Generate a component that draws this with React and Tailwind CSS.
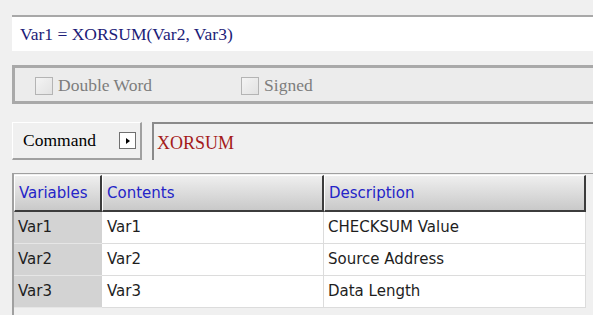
const serif = { fontFamily: '"Liberation Serif", "Times New Roman", serif' };

const CheckItem = ({ label, className }) => (
  <div className={`flex items-center ${className}`}>
    <span className="h-[18px] w-[18px] border border-[#b4b4b4] bg-gradient-to-br from-[#f4f4f4] to-[#e2e2e2]" />
    <span className="ml-[5px] text-[17.5px] leading-none text-[#7d7d7d]">{label}</span>
  </div>
);

const rows = [
  { name: 'Var1', contents: 'Var1', description: 'CHECKSUM Value' },
  { name: 'Var2', contents: 'Var2', description: 'Source Address' },
  { name: 'Var3', contents: 'Var3', description: 'Data Length' },
];

const HeaderCell = ({ children, className }) => (
  <div
    className={`flex h-full items-center border-l border-t border-b-2 border-r-2 border-l-white border-t-white border-b-[#3c3c3c] border-r-[#3c3c3c] bg-gradient-to-b from-[#efefef] to-[#c9c9c9] px-[4px] text-[#2424c8] ${className}`}
  >
    {children}
  </div>
);

export default function App() {
  return (
    <div className="h-[315px] w-[600px] overflow-hidden bg-white">
      <div className="flex h-full w-[593px] flex-col bg-[#f0f0f0] pl-[12px] pt-[15px]">
        {/* formula */}
        <div
          className="flex h-[36px] items-center border-t-2 border-[#a8a8a8] bg-white pl-[8px] text-[17.5px] text-[#1c1c78]"
          style={serif}
        >
          Var1 = XORSUM(Var2, Var3)
        </div>

        {/* options */}
        <div
          className="mt-[14px] flex h-[39px] items-center border-y-[3px] border-l-[3px] border-[#a9a9a9] bg-[#ececec] pt-[3px]"
          style={serif}
        >
          <CheckItem label="Double Word" className="ml-[20px]" />
          <CheckItem label="Signed" className="ml-[89px]" />
        </div>

        {/* command */}
        <div className="mt-[18px] flex h-[38px] items-stretch">
          <div
            className="flex w-[130px] items-center justify-between border border-b-2 border-r-2 border-l-white border-t-white border-b-[#a0a0a0] border-r-[#a0a0a0] bg-[#f0f0f0] pl-[10px] pr-[4px] text-[17.5px] text-black"
            style={serif}
          >
            <span>Command</span>
            <span className="flex h-[17px] w-[17px] items-center justify-center border border-[#707070] bg-white">
              <svg viewBox="0 0 8 8" className="h-[8px] w-[8px]">
                <path d="M2 1 L6 4 L2 7 Z" fill="#000" />
              </svg>
            </span>
          </div>
          <div
            className="ml-[10px] flex flex-1 items-center border-l-2 border-t-2 border-[#8a8a8a] bg-[#f0f0f0] pl-[3px] pt-[2px] text-[18px] text-[#a41a1a]"
            style={serif}
          >
            XORSUM
          </div>
        </div>

        {/* table */}
        <div
          className="mt-[13px] flex flex-1 flex-col border-l-2 border-t border-[#a0a0a0] pt-[1px] text-[15px]"
          style={{ fontFamily: '"DejaVu Sans", Tahoma, sans-serif' }}
        >
          <div className="flex h-[37px] w-[572px]">
            <HeaderCell className="w-[88px]">Variables</HeaderCell>
            <HeaderCell className="w-[222px]">Contents</HeaderCell>
            <HeaderCell className="flex-1">Description</HeaderCell>
          </div>
          {rows.map((row) => (
            <div key={row.name} className="flex h-[32px] w-[572px] text-[#1e1e1e]">
              <div className="flex w-[88px] items-center border-b border-[#e6e6e6] bg-[#d3d3d3] px-[4px]">
                {row.name}
              </div>
              <div className="flex w-[222px] items-center border-b border-r border-[#dcdcdc] bg-white px-[5px]">
                {row.contents}
              </div>
              <div className="flex flex-1 items-center border-b border-r border-[#dcdcdc] bg-white px-[4px]">
                {row.description}
              </div>
            </div>
          ))}
        </div>
      </div>
    </div>
  );
}
